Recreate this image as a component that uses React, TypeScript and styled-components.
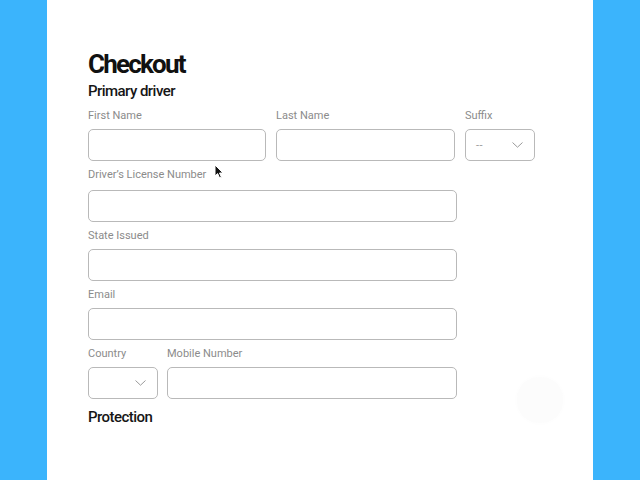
import styled, { createGlobalStyle } from "styled-components";

const GlobalStyle = createGlobalStyle`
    html, body {
        margin: 0;
        padding: 0;
        height: 100%;
        background: #3bb4fc;
        font-family: Roboto, "Liberation Sans", sans-serif;
    }
`;

const Page = styled.div`
    display: flex;
    height: 480px;
    padding-left: 47px;
`;

const Panel = styled.main`
    position: relative;
    width: 546px;
    height: 480px;
    background: #ffffff;
    padding: 46px 0 0 41px;
    box-sizing: border-box;
`;

const Title = styled.h1`
    margin: 1px 0 0;
    font-size: 26px;
    line-height: 34px;
    font-weight: 700;
    letter-spacing: -1.8px;
    color: #111;
`;

const SectionTitle = styled.h2`
    margin: 0;
    font-size: 15px;
    line-height: 20px;
    font-weight: 500;
    letter-spacing: -0.55px;
    color: #161616;
`;

const Form = styled.div`
    display: flex;
    flex-direction: column;
    gap: 7px;
    margin-top: 8px;
    width: 448px;
`;

const Row = styled.div<{ $gap?: number }>`
    display: flex;
    gap: ${(p) => p.$gap ?? 10}px;
`;

const Field = styled.label<{ $width: number; $labelGap?: number }>`
    display: flex;
    flex-direction: column;
    gap: ${(p) => p.$labelGap ?? 6}px;
    width: ${(p) => p.$width}px;
`;

const Label = styled.span`
    font-size: 11px;
    line-height: 14px;
    color: #8b8b8b;
    white-space: nowrap;
`;

const Input = styled.div`
    height: 32px;
    box-sizing: border-box;
    border: 1px solid #b9b9b9;
    border-radius: 5px;
    background: #fff;
`;

const Select = styled(Input)<{ $empty?: boolean }>`
    display: flex;
    align-items: center;
    justify-content: ${(p) => (p.$empty ? "flex-end" : "space-between")};
    padding: 0 11px 0 10px;
`;

const Placeholder = styled.span`
    font-size: 11px;
    color: #9a9a9a;
    letter-spacing: 0.5px;
`;

const Protection = styled(SectionTitle)`
    margin-top: 8px;
`;

const Fab = styled.div`
    position: absolute;
    left: 470px;
    top: 377px;
    width: 46px;
    height: 46px;
    border-radius: 50%;
    background: #fcfcfc;
    box-shadow: 0 0 5px rgba(0, 0, 0, 0.02);
`;

const Cursor = styled.svg`
    position: absolute;
    left: 167px;
    top: 164px;
`;

const Chevron = () => (
    <svg width="11" height="6" viewBox="0 0 11 6" fill="none">
        <path d="M0.5 0.5 L5.5 5.2 L10.5 0.5" stroke="#9a9a9a" strokeWidth="1" />
    </svg>
);

const App = () => {
    return (
        <>
            <GlobalStyle />
            <Page>
                <Panel>
                    <Title>Checkout</Title>
                    <SectionTitle>Primary driver</SectionTitle>
                    <Form>
                        <Row>
                            <Field $width={178}>
                                <Label>First Name</Label>
                                <Input />
                            </Field>
                            <Field $width={179}>
                                <Label>Last Name</Label>
                                <Input />
                            </Field>
                            <Field $width={70}>
                                <Label>Suffix</Label>
                                <Select>
                                    <Placeholder>--</Placeholder>
                                    <Chevron />
                                </Select>
                            </Field>
                        </Row>
                        <Field $width={369} $labelGap={8}>
                            <Label>Driver’s License Number</Label>
                            <Input />
                        </Field>
                        <Field $width={369}>
                            <Label>State Issued</Label>
                            <Input />
                        </Field>
                        <Field $width={369}>
                            <Label>Email</Label>
                            <Input />
                        </Field>
                        <Row $gap={9}>
                            <Field $width={70}>
                                <Label>Country</Label>
                                <Select $empty>
                                    <Chevron />
                                </Select>
                            </Field>
                            <Field $width={290}>
                                <Label>Mobile Number</Label>
                                <Input />
                            </Field>
                        </Row>
                    </Form>
                    <Protection>Protection</Protection>
                    <Fab />
                    <Cursor width="10" height="15" viewBox="0 0 10 15">
                        <path
                            d="M1 1 L1 12 L3.6 9.6 L5.6 14 L7.4 13.2 L5.5 9 L9 9 Z"
                            fill="#111"
                            stroke="#fff"
                            strokeWidth="1"
                        />
                    </Cursor>
                </Panel>
            </Page>
        </>
    );
};

export default App;
